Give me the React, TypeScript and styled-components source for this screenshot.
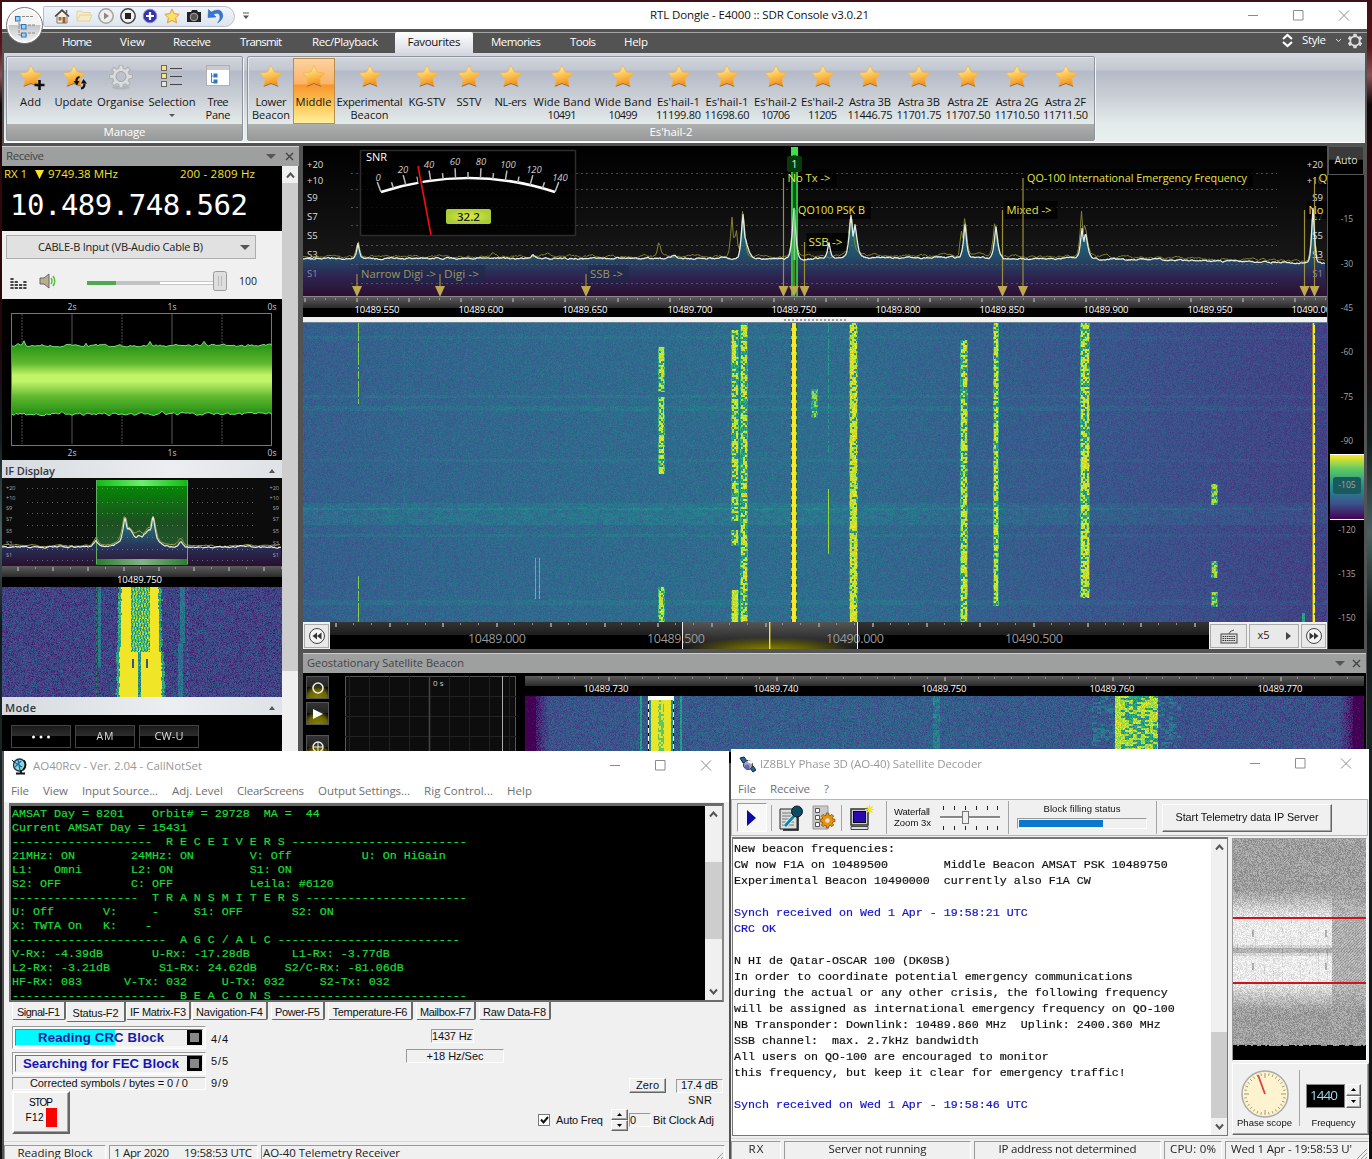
import React, { useLayoutEffect, useRef } from "react";
import styled, { createGlobalStyle, css } from "styled-components";

const UI = `"Open Sans", "Noto Sans", sans-serif`;
const SYS = `"Liberation Sans", Arial, sans-serif`;
const MONO = `"Liberation Mono", "Courier New", monospace`;

const Global = createGlobalStyle`
  *{box-sizing:border-box}
  html,body{margin:0;padding:0;overflow:hidden;background:#1d1b1c}
  svg,canvas{display:block;flex:none}
`;

/* ---------- text set to a fixed advance width ---------- */
const TextBox = styled.span<{ $w?: number; $s: number; $c?: string; $b?: number; $f?: string; $l?: number }>`
  display: block;
  flex: none;
  white-space: pre;
  line-height: 1.1;
  font-family: ${(p) => p.$f || UI};
  font-size: ${(p) => p.$s}px;
  font-weight: ${(p) => p.$b || 400};
  color: ${(p) => p.$c || "inherit"};
  width: ${(p) => (p.$w ? p.$w + "px" : "auto")};
  margin-left: ${(p) => p.$l || 0}px;
`;
type TP = { w?: number; s?: number; c?: string; b?: number; f?: string; l?: number; children: string };
function T({ w, s = 11.5, c, b, f, l, children }: TP) {
  const ref = useRef<HTMLSpanElement>(null);
  useLayoutEffect(() => {
    const el = ref.current;
    if (!el || !w) return;
    el.style.letterSpacing = "0px";
    const r = document.createRange();
    r.selectNodeContents(el);
    const nat = r.getBoundingClientRect().width;
    const n = Math.max(1, children.length - 1);
    el.style.letterSpacing = ((w - nat) / n).toFixed(3) + "px";
  }, [w, s, children]);
  return (
    <TextBox ref={ref} $w={w} $s={s} $c={c} $b={b} $f={f} $l={l}>
      {children}
    </TextBox>
  );
}

/* ---------- noise, colour map, rasters ---------- */
function rng(seed: number) {
  let a = seed;
  return () => {
    a |= 0;
    a = (a + 0x6d2b79f5) | 0;
    let t = Math.imul(a ^ (a >>> 15), 1 | a);
    t = (t + Math.imul(t ^ (t >>> 7), 61 | t)) ^ t;
    return ((t ^ (t >>> 14)) >>> 0) / 4294967296;
  };
}
const STOPS = [
  [68, 1, 84], [71, 44, 122], [59, 81, 139], [44, 113, 142], [33, 144, 141],
  [39, 173, 129], [92, 200, 99], [170, 220, 50], [253, 231, 37],
];
function viridis(v: number): number[] {
  const t = Math.min(0.9999, Math.max(0, v)) * 8;
  const i = Math.floor(t);
  const f = t - i;
  return [0, 1, 2].map((k) => STOPS[i][k] * (1 - f) + STOPS[i + 1][k] * f);
}
type Pixel = (x: number, y: number, r: () => number) => number[];
function Raster({ w, h, seed, pixel }: { w: number; h: number; seed: number; pixel: Pixel }) {
  const ref = useRef<HTMLCanvasElement>(null);
  useLayoutEffect(() => {
    const ctx = ref.current!.getContext("2d")!;
    const img = ctx.createImageData(w, h);
    const r = rng(seed);
    for (let y = 0; y < h; y++)
      for (let x = 0; x < w; x++) {
        const c = pixel(x, y, r);
        const o = (y * w + x) * 4;
        img.data[o] = c[0];
        img.data[o + 1] = c[1];
        img.data[o + 2] = c[2];
        img.data[o + 3] = 255;
      }
    ctx.putImageData(img, 0, 0);
  }, []);
  return <canvas ref={ref} width={w} height={h} />;
}
const hash = (a: number, b: number) => {
  const s = Math.sin(a * 127.1 + b * 311.7) * 43758.5453;
  return s - Math.floor(s);
};

/* [x0, x1, y0, y1, density, level] in waterfall pixels */
const SIGNALS = [
  [55, 55, 0, 80, 0.9, 0.85], [55, 55, 253, 298, 0.95, 0.85],
  [101, 101, 0, 298, 0.5, 0.42], [104, 104, 0, 298, 0.25, 0.42],
  [232, 232, 235, 275, 1, 0.78], [236, 236, 235, 275, 1, 0.78],
  [356, 360, 24, 68, 0.62, 1], [356, 360, 74, 150, 0.62, 1], [356, 360, 264, 298, 0.7, 1],
  [429, 434, 7, 197, 0.55, 1], [429, 434, 207, 222, 0.55, 1], [429, 434, 267, 298, 0.9, 1],
  [438, 443, 0, 298, 0.55, 1],
  [509, 513, 66, 94, 0.42, 0.9],
  [525, 525, 0, 128, 0.7, 0.6], [525, 525, 166, 230, 1, 0.9],
  [547, 553, 0, 298, 0.82, 1],
  [658, 663, 17, 86, 0.52, 1], [658, 663, 86, 298, 0.65, 1],
  [691, 694, 0, 282, 0.7, 1],
  [778, 785, 0, 135, 0.55, 1], [778, 785, 135, 274, 0.72, 1],
  [909, 913, 161, 181, 0.6, 0.95], [909, 913, 238, 254, 0.6, 0.95], [909, 913, 269, 283, 0.6, 0.95],
  [999, 1001, 290, 298, 1, 0.65],
];
const mainPixel: Pixel = (x, y, r) => {
  const u = x / 1024;
  let v = 0.31 + 0.045 * Math.sin(Math.min(1, u / 0.5) * 1.57) - Math.max(0, u - 0.52) * 0.33 - Math.max(0, 0.1 - u) * 0.1;
  const band = (c: number, w: number, a: number) => {
    const d = Math.abs(y - c);
    if (d < w) v += a * (1 - u * 0.35) * (0.4 + 0.9 * hash(Math.floor(x / 5), y >> 1));
  };
  band(14, 2, 0.035); band(73, 2, 0.05); band(85, 3, 0.05); band(183, 4, 0.055);
  band(193, 9, 0.06); band(212, 2, 0.05); band(279, 3, 0.045); band(137, 1.5, 0.035);
  v += (r() + r() - 1) * 0.08;
  if (x >= 489 && x <= 492) return viridis(1);
  if (x === 488 || x === 493) return y % 8 < 5 ? [60, 80, 60] : viridis(0.8);
  if (x === 1010 || x === 1011) return y % 10 < 2 && x === 1011 ? viridis(0.5) : viridis(1);
  if (x === 1009) return [150, 130, 40];
  for (const [a, b, y0, y1, den, lv] of SIGNALS) {
    if (y < y0 || y > y1) continue;
    if (x >= a && x <= b) {
      if (b === a) return hash(x, y >> 1) < den ? viridis(lv - r() * 0.1) : viridis(v);
      const on = hash(a + ((x - a) >> 1) * 7, y >> 1) < den;
      return viridis(on ? lv - r() * 0.15 : 0.4 + r() * 0.3);
    }
    if (b - a > 2 && (x === a - 1 || x === b + 1)) return viridis(0.38 + 0.4 * hash(x, y >> 1));
  }
  return viridis(v);
};
const ifPixel: Pixel = (x, y, r) => {
  let v = 0.2 + (r() + r() - 1) * 0.16;
  const wob = (hash(7, y >> 1) - 0.5) * 2;
  if (x === 94) return y % 6 < 4 ? [40, 120, 90] : viridis(0.1);
  if (x === 185) return y % 6 < 4 ? [70, 110, 90] : viridis(0.1);
  if (Math.abs(x - 97) < 2 && y < 80) v = 0.28 + r() * 0.22;
  if (Math.abs(x - 180 + (y > 55 ? 2 : 0)) < 2.5) v = 0.26 + r() * 0.22;
  const top = 119 - (y > 64 ? 1 : 0) - y / 90;
  const bot = 156 + (y > 64 ? 2 : 0) + y / 90;
  if (x > top - 3 + wob && x < bot + 3 + wob) v = 0.4 + r() * 0.35;
  if (x > top + wob * 0.5 && x < bot + wob * 0.5) v = 0.98;
  if (y < 65 && x > 128 && x < 148) v = (x % 3 === (y >> 2) % 2 ? 0.5 : 0.78) + (r() - 0.5) * 0.35;
  if (y >= 65 && x > 135 && x < 139) v = 0.3 + r() * 0.4;
  if (y > 71 && y < 81 && (x === 130 || x === 131 || x === 144 || x === 145)) v = 0.25;
  return viridis(v);
};
const geoPixel: Pixel = (x, y, r) => {
  const bell = 0.24 + 0.06 * Math.exp(-Math.pow((x - 330) / 280, 2));
  let v = bell + (r() + r() - 1) * 0.13;
  const edge = Math.min(x, 838 - x);
  if (edge < 24) v -= ((24 - edge) / 24) * 0.35;
  if (edge < 11) v = r() < 0.05 ? 0.08 : 0;
  if (x >= 123 && x <= 148 && y < 4) return [255, 255, 255];
  if (x === 123 || x === 148) return y % 8 < 5 ? [255, 255, 255] : [0, 0, 0];
  if (x === 115 || x === 116 || x === 155 || x === 156) v = 0.45 + r() * 0.18;
  if (x > 123 && x < 148) {
    v = 0.45 + r() * 0.15;
    if (x > 125 && x < 146) v = 0.97;
    if (x > 132 && x < 139) v = hash(x >> 1, y >> 1) > 0.35 ? 0.75 : 0.95;
  }
  if (Math.abs(x - 411) < 4) v += 0.06 + (hash(x >> 1, y >> 1) > 0.5 ? 0.12 : 0);
  if (Math.abs(x - 611) < 45) {
    const d = Math.abs(x - 611);
    const h = hash(x >> 2, y >> 1);
    if (d < 22) v = h > 0.45 || x < 596 || (x > 624 && h > 0.25) ? 0.78 + r() * 0.22 : 0.4 + r() * 0.3;
    else if (h > 0.7) v += 0.13;
  }
  return viridis(v);
};
const greyPixel: Pixel = (x, y, r) => {
  if (y >= 206 + (hash(x >> 1, 3) > 0.6 ? 1 : 0)) return [0, 0, 0];
  if (y === 78 || y === 79 || y === 143 || y === 144) return [205, 20, 30];
  const d = Math.abs(y - 111);
  const right = x > 98;
  let v = 158;
  if (d < 60) v = right ? 158 + (60 - d) * 0.9 : 160 + (60 - d) * 2.6;
  if (right && d < 32) v = 182;
  v = Math.min(234, v);
  if (d < 3) v -= right ? 8 : 58;
  else if (d < 6 && !right) v -= 22;
  v += (r() - 0.5) * (d < 32 ? 40 : 54);
  if (right && d < 32 && (x + y) % 3 === 0) v -= 26;
  if (!right && d < 32 && x % 9 === 4 && hash(x, y >> 2) > 0.6) v -= 22;
  if ((x === 19 || x === 20 || x === 92 || x === 93) && (Math.abs(y - 94) < 4 || Math.abs(y - 127) < 4)) v -= 60;
  return [v, v, v];
};

/* ---------- spectrum traces ---------- */
type Peak = [number, number, number];
function trace(n: number, base: (x: number) => number, amp: number, peaks: Peak[], seed: number, step = 2, keep = 0.7) {
  const r = rng(seed);
  let drift = 0;
  const pts: string[] = [];
  for (let x = 0; x <= n; x += step) {
    drift = drift * keep + (r() - 0.5) * amp;
    let lift = 0;
    for (const [px, top, w] of peaks)
      lift = Math.max(lift, (base(x) - top) * Math.exp(-Math.pow(Math.abs(x - px) / w, 1.4)));
    pts.push(`${x},${(base(x) + drift - lift).toFixed(1)}`);
  }
  return pts.join(" ");
}
const mainBase = (x: number) => 112.5 + (x > 780 ? (x - 780) * 0.02 : 0) - (x > 540 && x < 700 ? 0.8 : 0);
const WHITE = trace(1022, mainBase, 1.3, [[55, 98, 2], [230, 109, 3], [370, 109, 5], [440, 69, 2.3], [442, 92, 4], [491, 62, 2.4], [526, 97, 2], [548, 69, 2.6], [552, 79, 3], [662, 78, 2.2], [693, 81, 2.4], [779, 83, 2.2], [782.5, 88, 2.8], [1010, 62, 2]], 5, 1, 0.75);
const OLIVE = trace(1022, (x) => mainBase(x) - 2, 2.2, [[55, 94, 2], [190, 107, 2], [245, 107, 2], [356, 96, 2], [429, 70, 2], [433, 80, 2], [440, 60, 2.2], [491, 58, 2.4], [548, 66, 3], [658, 74, 1], [662, 69, 2.2], [692, 73, 2.4], [778.5, 66, 2], [782, 78, 3], [1010, 57, 2.2]], 11, 1.5, 0.75);
const IFW = trace(279, () => 69, 1.3, [[94, 62, 3], [123, 39, 3.5], [127, 51, 9], [151, 39, 3.5], [147, 51, 9], [137, 58, 12], [179, 63, 3]], 21, 1);
const IFO = trace(279, () => 68, 1.8, [[94, 59, 3], [123, 36, 4], [127, 49, 9], [151, 36, 4], [147, 49, 9], [137, 54, 12], [179, 59, 3]], 27, 2);
const AUDTOP = trace(260, () => 31.5, 2.4, [[5, 28, 1], [12, 28, 1], [74, 28, 1], [138, 27, 1], [185, 28, 1], [192, 28, 1]], 31, 2, 0.4);
const AUDBOT = trace(260, () => 100, 2.6, [[50, 97, 1], [150, 98, 1], [215, 98, 1]], 37, 2, 0.4);

const Ticks = ({ w, from, step, major, h = 7 }: { w: number; from: number; step: number; major: number; h?: number }) => {
  const out = [];
  for (let i = 0, x = from; x < w; i++, x += step)
    out.push(<rect key={i} x={Math.round(x)} y={1} width={i % major === 0 ? 2 : 1} height={i % major === 0 ? h : h * 0.5} fill="#8c8c8c" />);
  return <>{out}</>;
};

const MARKS: [number, number, string, number, boolean][] = [
  [54, 128, "Narrow Digi ->", 75, true], [137, 128, "Digi ->", 35, true], [283, 128, "SSB ->", 33, true],
  [480.5, 32, "No Tx ->", 43, false], [491, 64, "QO100 PSK B", 67, false], [501.5, 96, "SSB ->", 34, false],
  [699.5, 64, "Mixed ->", 45, false], [720, 32, "QO-100 International Emergency Frequency", 220, false],
  [1001.5, 64, "No", 15, false], [1011.5, 32, "Q", 9, false],
];
const SCALE: [string, number][] = [["+20", 18], ["+10", 34], ["S9", 51], ["S7", 70], ["S5", 89], ["S3", 108], ["S1", 127]];

function Spectrum() {
  return (
    <svg width={1024} height={151} fontFamily={UI}>
      <defs>
        <linearGradient id="sb" x1="0" y1="0" x2="0" y2="1"><stop offset="0" stopColor="#000" /><stop offset=".7" stopColor="#161616" /></linearGradient>
        <linearGradient id="sf" gradientUnits="userSpaceOnUse" x1="0" y1="64" x2="0" y2="150">
          <stop offset="0" stopColor="#1f8a80" /><stop offset=".56" stopColor="#234a68" /><stop offset=".78" stopColor="#2d2350" /><stop offset="1" stopColor="#2c1030" />
        </linearGradient>
        <linearGradient id="vf"><stop offset="0" stopColor="#2fc040" /><stop offset=".2" stopColor="#2fc040" /><stop offset=".35" stopColor="#0c5a16" /><stop offset=".65" stopColor="#0c5a16" /><stop offset=".8" stopColor="#2fc040" /><stop offset="1" stopColor="#2fc040" /></linearGradient>
        <radialGradient id="mv"><stop offset="0" stopColor="#dcee3c" /><stop offset="1" stopColor="#accc38" /></radialGradient>
      </defs>
      <rect width={1024} height={151} fill="url(#sb)" />
      <polygon points={`0,150 ${WHITE} 1024,150`} fill="url(#sf)" />
      {[27, 43, 61, 79, 99, 118, 137].map((y) => <line key={y} x1={48} x2={974} y1={y + 0.5} y2={y + 0.5} stroke="#666" strokeOpacity=".7" strokeDasharray="2 3" />)}
      <polyline points={OLIVE} fill="none" stroke="#84832f" strokeWidth="1" />
      {SCALE.map(([s, y], i) => <text key={s} x={4} y={y + 4} fontSize={9.5} fill={i === 6 ? "#8d86a5" : "#ddd"}>{s}</text>)}
      {SCALE.map(([s, y], i) => <text key={s} x={1020} y={y + 4} fontSize={9.5} textAnchor="end" fill={i === 6 ? "#8d86a5" : "#ddd"}>{s}</text>)}
      {MARKS.map(([x, y, , w, dim], i) => <rect key={i} x={x + 2} y={y - 9} width={w + 8} height={18} fill={dim ? "#1b2747" : "#000"} fillOpacity={dim ? 0.5 : 0.75} />)}
      <rect x={488} y={2} width={7} height={148} fill="url(#vf)" />
      {MARKS.map(([x, y, s, w, dim], i) => (
        <g key={i}>
          <line x1={x} x2={x} y1={y} y2={142} stroke="#9b9038" strokeWidth={1.2} />
          <text x={x + 4} y={y + 4.2} fontSize={11.5} textLength={w} lengthAdjust="spacingAndGlyphs" fill={dim ? "#9c9765" : "#e6e44a"}>{s}</text>
          <polygon points={`${x - 5},140 ${x + 5},140 ${x},151`} fill="#bba94c" />
        </g>
      ))}
      <polyline points={WHITE} fill="none" stroke="#e4eae6" strokeWidth="1.3" strokeLinejoin="round" />
      <path d="M491.500 64v50" stroke="#7fd08c" strokeWidth="2" />
      <rect x={484} y={10} width={15} height={16} rx={2} fill="#063c0c" />
      <text x={491.5} y={22} fontSize={11} textAnchor="middle" fill="#d8f0d8">1</text>
      <rect x={488} y={1} width={7} height={8} fill="#3be04c" />
      <rect x={57.5} y={4.5} width={215} height={85} fill="#000" fillOpacity=".82" stroke="#2c2c2c" strokeWidth="1.5" />
      <text x={63} y={15} fontSize={11} textLength={21} fill="#fff">SNR</text>
      <path d="M78 46Q166 18 252 46" fill="none" stroke="#fff" strokeWidth="2.6" />
      {Array.from({ length: 15 }, (_, i) => {
        const t = i / 14;
        const x = 78 + 174 * t;
        const y = (1 - t) * (1 - t) * 46 + 2 * t * (1 - t) * 18 + t * t * 46;
        const l = i % 2 ? 6 : 10;
        const k = (t - 0.5) * 0.75;
        return <line key={i} x1={x} y1={y} x2={x + k * l} y2={y - l} stroke="#bbb" strokeWidth="1.5" />;
      })}
      {[[75, 35, "0"], [100, 27, "20"], [126, 22, "40"], [152, 19, "60"], [178, 19, "80"], [205, 22, "100"], [231, 27, "120"], [257, 35, "140"]].map(([x, y, s]) => (
        <text key={s} x={x} y={y} fontSize={9.5} fontStyle="italic" textAnchor="middle" fill="#ccc">{s}</text>
      ))}
      <polygon points="113,18 117,18 127,89 122,89" fill="#000" />
      <line x1={115} y1={20} x2={128} y2={89} stroke="#f01010" strokeWidth="1.6" />
      <rect x={143} y={63} width={45} height={15} rx={2} fill="url(#mv)" />
      <text x={165.5} y={75} fontSize={11.5} fontWeight={600} textAnchor="middle" fill="#222">32.2</text>
      <line x1={0} x2={1024} y1={150.5} y2={150.5} stroke="#8b8790" />
    </svg>
  );
}

/* ---------- icons ---------- */
const Star = ({ s = 26 }: { s?: number }) => (
  <svg width={s} height={s} viewBox="0 0 26 26">
    <defs><linearGradient id="st" x1="0" y1="0" x2="0.3" y2="1"><stop offset="0" stopColor="#fff6c4" /><stop offset=".45" stopColor="#fdd066" /><stop offset="1" stopColor="#f6941a" /></linearGradient></defs>
    <path d="M13 .300L16.300 7 24 8.300 18.800 13.800 20 21 13 18.200 6 21 7.200 13.800 2 8.300 9.700 7Z" fill="url(#st)" stroke="#eeb152" strokeWidth=".7" strokeLinejoin="round" />
    <path d="M5.800 21.300L13 18.500 20.200 21.300" fill="none" stroke="#8a6048" strokeWidth=".9" />
  </svg>
);
const gearPath = (cx: number, cy: number, r: number, n = 8) => {
  const p: string[] = [];
  for (let i = 0; i < n; i++)
    for (const [o, k] of [[-0.32, 0.74], [-0.2, 1], [0.2, 1], [0.32, 0.74]]) {
      const a = ((i + o) / n) * Math.PI * 2 - Math.PI / 2;
      p.push(`${(cx + Math.cos(a) * r * k).toFixed(1)} ${(cy + Math.sin(a) * r * k).toFixed(1)}`);
    }
  return "M" + p.join("L") + "Z";
};
const RIcon = ({ kind }: { kind: string }) => {
  if (kind === "add") return <svg width={30} height={28}><g transform="translate(2 0)"><Star /></g><path d="M18.500 20h10M23.500 15v10" stroke="#111" strokeWidth="2.600" /></svg>;
  if (kind === "update") return <svg width={30} height={28}><g transform="translate(2 0)"><Star /></g><path d="M20.500 12q-3.500.500-3 5" stroke="#111" strokeWidth="2.200" fill="none" /><path d="M14.500 16l3.500 4.500 2.500-4.500Z" fill="#111" /><path d="M22 23.500q3.500-.500 3.500-5" stroke="#111" strokeWidth="2.200" fill="none" /><path d="M22 18.500l2.500-4.500 3.500 4.500Z" fill="#111" /></svg>;
  if (kind === "gear") return <svg width={28} height={28}><ellipse cx="14" cy="22.500" rx="9" ry="2" fill="#999" opacity=".4" /><path d={gearPath(14, 11.500, 11.5)} fill="#dadcde" stroke="#b0b3b6" strokeLinejoin="round" strokeWidth="1.200" /><circle cx="14" cy="11.500" r="5" fill="#bdc2cb" stroke="#a0a3a7" /></svg>;
  if (kind === "list") return <svg width={28} height={28}>{[1, 9, 17].map((y, i) => <g key={y}><rect x="3.500" y={y - 0.5} width="5" height="5" fill={i < 2 ? "#fbe08a" : "#e4e8ec"} stroke="#6b6a50" /><path d={`M12 ${y + 2.5}h12`} stroke="#444" /></g>)}</svg>;
  if (kind === "tree") return <svg width={28} height={28}><rect x="2.500" y=".500" width="23" height="20" fill="#fff" stroke="#b0b0b4" /><rect x="3" y="1" width="22" height="4" fill="#c9c9cf" /><path d="M7.500 8v9.500h4M7.500 11h4" stroke="#777" fill="none" /><rect x="9.500" y="8.500" width="4" height="4" fill="#2a78c8" /><rect x="9.500" y="14.500" width="4" height="4" fill="#2a78c8" /></svg>;
  return <Star />;
};
const Quick = ({ k }: { k: string }) => (
  <svg width={18} height={18} viewBox="0 0 18 18">
    {k === "home" && <><path d="M4 8.500v7.500h10V8.500L9 4Z" fill="#f5efdf" stroke="#777" /><path d="M2 9.500L9 3l7 6.500" stroke="#444" strokeWidth="1.500" fill="none" /><rect x="5.500" y="10" width="3" height="3.500" fill="#b0682c" /><rect x="9.500" y="10" width="3" height="6" fill="#9a5a2a" /><path d="M13.500 3v4" stroke="#666" strokeWidth="1.500" /></>}
    {k === "open" && <path d="M2 14V4h5l1 1.500h7V8M2 14l3-6h12l-2.500 6Z" fill="#f7ebc6" stroke="#e2d3a4" />}
    {k === "play" && <><circle cx="9" cy="9" r="7.200" fill="#eee" stroke="#a2a2a2" strokeWidth="1.500" /><path d="M7 5.500v7l5-3.500Z" fill="#888" /></>}
    {k === "stop" && <><circle cx="9" cy="9" r="7.200" fill="#f2f2f2" stroke="#444" strokeWidth="1.500" /><rect x="6" y="6" width="6" height="6" fill="#222" /></>}
    {k === "plus" && <><circle cx="9" cy="9" r="6.800" fill="#3434ac" stroke="#8a8ad0" /><path d="M9 5v8M5 9h8" stroke="#fff" strokeWidth="2.200" /></>}
    {k === "star" && <path d="M9 2l2.200 4.600 5 .700-3.600 3.500.9 5L9 13.400 4.500 15.800l.9-5L1.800 7.300l5-.700Z" fill="#fde06a" stroke="#e09a35" />}
    {k === "cam" && <><path d="M2 5h4l1-2h5l1 2h3v10H2Z" fill="#222" /><circle cx="9" cy="10" r="3.800" fill="#555" stroke="#aaa" /></>}
    {k === "undo" && <path d="M1.500 2.500L1 10.500l8-.500-2.600-2.400Q11 4.500 12.600 8t-2 8q7-4.500 4.600-10T4.200 5Z" fill="#3577d4" stroke="#2a5eb0" strokeWidth=".500" />}
  </svg>
);
const WinBtns = () => (
  <svg width={112} height={15} stroke="#8c8c8c" fill="none"><path d="M1 6.500h10M46.500 1.500h9.500v9.500h-9.500ZM92 1.500l10 10M102 1.500l-10 10" /></svg>
);
const DownTri = ({ w = 9, h, c = "#555" }: { w?: number; h?: number; c?: string }) => <svg width={w} height={h || w / 2} viewBox="0 0 10 5" preserveAspectRatio="none"><path d="M0 0h10L5 5Z" fill={c} /></svg>;
const Chevron = ({ up }: { up?: boolean }) => <svg width={9} height={7}><path d={up ? "M1 5.500l3.500-4 3.500 4" : "M1 1.500l3.500 4 3.500-4"} stroke="#555" strokeWidth="2" fill="none" /></svg>;
const Grip = () => <svg width={12} height={18} stroke="#999"><path d="M0 18L12 6M4 18l8-8M8 18l4-4" /></svg>;

/* ---------- layout primitives ---------- */
const Row = styled.div<{ $h?: number; $w?: number; $g?: number; $l?: number; $t?: number; $a?: string }>`
  display: flex;
  flex: none;
  align-items: ${(p) => p.$a || "center"};
  gap: ${(p) => p.$g || 0}px;
  height: ${(p) => (p.$h ? p.$h + "px" : "auto")};
  width: ${(p) => (p.$w ? p.$w + "px" : "auto")};
  margin-left: ${(p) => p.$l || 0}px;
  margin-top: ${(p) => p.$t || 0}px;
`;
const Col = styled.div<{ $w?: number; $h?: number; $l?: number }>`
  display: flex;
  flex-direction: column;
  flex: none;
  width: ${(p) => (p.$w ? p.$w + "px" : "auto")};
  height: ${(p) => (p.$h ? p.$h + "px" : "auto")};
  margin-left: ${(p) => p.$l || 0}px;
`;
const Desktop = styled.div`
  position: relative;
  width: 1372px;
  height: 1159px;
  overflow: hidden;
  background: linear-gradient(180deg, #3c1014 0, #5a1418 4%, #8a5050 6.5%, #100808 9%, #32080c 16%, #210709 30%, #0f2020 38%, #4a6060 46%, #0c1a1a 54%, #1a2526 62%, #10100f 100%);
`;
const Win = styled.section<{ $x: number; $y: number; $w: number; $h: number; $bg: string }>`
  position: absolute;
  left: ${(p) => p.$x}px;
  top: ${(p) => p.$y}px;
  width: ${(p) => p.$w}px;
  height: ${(p) => p.$h}px;
  background: ${(p) => p.$bg};
  display: flex;
  flex-direction: column;
  overflow: hidden;
`;

/* ---------- ribbon ---------- */
const TitleBar = styled.header`
  display: flex; align-items: center; height: 27px; background: #fff; flex: none;
`;
const Pill = styled.div`
  display: flex; align-items: center; gap: 4px; height: 21px; width: 192px; margin: 1px 0 0 41px; padding-left: 9px;
  border: 1px solid #b9bfca; border-radius: 2px 11px 11px 2px; background: linear-gradient(#f0f4f9, #dfe6ef);
`;
const Orb = styled.div`
  position: absolute; left: 4px; top: 5px; width: 37px; height: 37px; border-radius: 50%;
  background: linear-gradient(#f4f4f5 0 48%, #c6c7ca 50%, #f5f5f5); border: 1px solid #777; box-shadow: inset 0 0 0 1.5px #fff;
`;
const TabBar = styled.nav`
  display: flex; align-items: center; height: 24px; flex: none; padding-top: 2px;
  background: #535353; border-top: 1px solid #535353; box-shadow: inset 0 2px 0 #535353, inset 0 3px 0 #a5a5a5;
`;
const ActiveTab = styled.div`
  display: flex; align-items: center; justify-content: center; width: 78px; height: 22px; margin: 0 18px 0 17px;
  background: linear-gradient(#fff, #d6dae1); border-radius: 2px 2px 0 0;
`;
const Ribbon = styled.div`
  display: flex; align-items: flex-start; gap: 4px; height: 90px; flex: none; margin: 0 2px 0 2px; padding: 3px 2px 0;
  background: linear-gradient(#d5d8df 0, #c2c7d1 17px, #b4bac7 18px, #c8cdd4 42px, #e3eaea 70px, #e9f1f0); border-bottom: 1px solid #fff;
`;
const Group = styled.div<{ $w: number }>`
  width: ${(p) => p.$w}px; height: 85px; border: 1px solid #8f949c; border-radius: 2px; display: flex; flex-direction: column;
  box-shadow: inset 1px 1px 0 #e4e7ec, 1px 1px 0 #f2f4f6;
`;
const GroupItems = styled.div`display: flex; height: 67px; padding-left: 1.5px;`;
const GroupFoot = styled.div`
  flex: 1; display: flex; align-items: center; justify-content: center; background: linear-gradient(#adb0ae, #979a99);
`;
const Item = styled.div<{ $w: number; $on?: boolean }>`
  width: ${(p) => p.$w}px; flex: none; display: flex; flex-direction: column; align-items: center; padding-top: 7px; margin-top: 1px; color: #151515;
  ${(p) => p.$on && css`background: linear-gradient(#fbd4a4 0, #fbb267 26px, #f8962c 27px, #fdc95b 48px, #fff2a0); box-shadow: inset 0 0 0 1px #b78c4c;`}
`;
const ItemIcon = styled.div`height: 31px; display: flex; justify-content: center;`;
type ItemDef = { w: number; icon?: string; l1: string; w1: number; l2?: string; w2?: number; on?: boolean; drop?: boolean };
const MANAGE: ItemDef[] = [
  { w: 44, icon: "add", l1: "Add", w1: 21 }, { w: 42, icon: "update", l1: "Update", w1: 38 }, { w: 52, icon: "gear", l1: "Organise", w1: 47 },
  { w: 51, icon: "list", l1: "Selection", w1: 47, drop: true }, { w: 41, icon: "tree", l1: "Tree", w1: 21, l2: "Pane", w2: 25 },
];
const FAVS: ItemDef[] = [
  { w: 43, l1: "Lower", w1: 31, l2: "Beacon", w2: 38 }, { w: 42, l1: "Middle", w1: 36, on: true }, { w: 70, l1: "Experimental", w1: 66, l2: "Beacon", w2: 38 },
  { w: 45, l1: "KG-STV", w1: 37 }, { w: 39, l1: "SSTV", w1: 25 }, { w: 44, l1: "NL-ers", w1: 32 }, { w: 59, l1: "Wide Band", w1: 57, l2: "10491", w2: 29 },
  { w: 63, l1: "Wide Band", w1: 57, l2: "10499", w2: 29 }, { w: 48, l1: "Es'hail-1", w1: 43, l2: "11199.80", w2: 45 }, { w: 49, l1: "Es'hail-1", w1: 43, l2: "11698.60", w2: 45 },
  { w: 48, l1: "Es'hail-2", w1: 43, l2: "10706", w2: 29 }, { w: 46, l1: "Es'hail-2", w1: 43, l2: "11205", w2: 29 }, { w: 49, l1: "Astra 3B", w1: 42, l2: "11446.75", w2: 45 },
  { w: 49, l1: "Astra 3B", w1: 42, l2: "11701.75", w2: 45 }, { w: 49, l1: "Astra 2E", w1: 41, l2: "11707.50", w2: 45 }, { w: 49, l1: "Astra 2G", w1: 43, l2: "11710.50", w2: 45 },
  { w: 48, l1: "Astra 2F", w1: 41, l2: "11711.50", w2: 45 },
];
const RibbonGroup = ({ w, items, name, nw }: { w: number; items: ItemDef[]; name: string; nw: number }) => (
  <Group $w={w}>
    <GroupItems>
      {items.map((i, k) => (
        <Item key={k} $w={i.w} $on={i.on}>
          <ItemIcon><RIcon kind={i.icon || "star"} /></ItemIcon>
          <Row $h={13}><T w={i.w1} s={11.2}>{i.l1}</T></Row>
          {i.l2 && <Row $h={13}><T w={i.w2} s={11}>{i.l2}</T></Row>}
          {i.drop && <Row $h={12}><DownTri w={6} /></Row>}
        </Item>
      ))}
    </GroupItems>
    <GroupFoot><T w={nw} c="#fff">{name}</T></GroupFoot>
  </Group>
);

/* ---------- docked panels ---------- */
const PaneHead = styled.div<{ $h: number }>`
  display: flex; align-items: center; justify-content: space-between; height: ${(p) => p.$h}px; flex: none; padding: 0 5px 1px 4px; background: #9e9f9f; color: #444;
  border-top: 1px solid #ccc;
`;
const FreqBox = styled.div`height: 65px; background: #000; color: #f5e326; flex: none;`;
const Combo = styled.div`
  height: 24px; width: 250px; margin: 4px 0 0 4px; display: flex; align-items: center; background: #e1e1e1; border: 1px solid #adadad; color: #222; flex: none;
`;
const SectionHead = styled.div`
  display: flex; align-items: center; justify-content: space-between; height: 18px; flex: none; padding: 4px 7px 0 3px; color: #33383e;
  background: linear-gradient(90deg, #d6dade, #eceef1 60%, #dfe2e6);
`;
const DarkBtn = styled.div`
  width: 60px; height: 23px; display: flex; align-items: center; justify-content: center; border: 1px solid #444; color: #ddd;
  background: linear-gradient(#1a1a1a, #2e2e2e 48%, #000 50%);
`;
const RulerBox = styled.div<{ $w: number; $h: number }>`
  position: relative; width: ${(p) => p.$w}px; height: ${(p) => p.$h}px; background: #000; overflow: hidden; flex: none;
`;
const Freq = styled.div<{ $x: number; $b: number }>`
  position: absolute; left: ${(p) => p.$x}px; bottom: ${(p) => p.$b}px; transform: translateX(-50%);
`;
function Ruler({ w, h, bar, labels, tick, lw = 45 }: { w: number; h: number; bar: number; labels: [number, string][]; tick: [number, number, number]; lw?: number }) {
  return (
    <RulerBox $w={w} $h={h}>
      <svg width={w} height={bar}>
        <defs><linearGradient id="rb" x1="0" y1="0" x2="0" y2="1"><stop offset="0" stopColor="#5c5c5c" /><stop offset="1" stopColor="#2a2a2a" /></linearGradient></defs>
        <rect width={w} height={bar} fill="url(#rb)" />
        <Ticks w={w} from={tick[0]} step={tick[1]} major={tick[2]} h={4} />
      </svg>
      {labels.map(([x, s]) => <Freq key={s} $x={x} $b={2}><T s={9.5} w={lw} c="#fff">{s}</T></Freq>)}
    </RulerBox>
  );
}
const Splitter = styled.div`
  height: 6px; background: #f0f0f0; display: flex; align-items: center; padding-left: 481px; flex: none; border-bottom: 1px solid #6a8296;
`;
const Dots = styled.div`width: 62px; height: 2px; background: repeating-linear-gradient(90deg, #999 0 2px, transparent 2px 4px);`;
const LightBtn = styled.div<{ $w: number }>`
  width: ${(p) => p.$w}px; height: 24px; display: flex; align-items: center; justify-content: center; gap: 16px; background: #e9e9e9; border: 1px solid #aaa; color: #222;
`;
const NavBar = styled.div`display: flex; height: 27px; flex: none; align-items: center; background: #f0f0f0; padding: 0 1px; justify-content: space-between;`;
const ScaleCol = styled.div`
  position: relative; width: 36px; height: 503px; margin-left: 1px; background: #000; display: flex; flex-direction: column; align-items: center; flex: none;
`;
const AutoBtn = styled.div`
  width: 36px; height: 29px; border: 1px solid #555; background: linear-gradient(#3a3a3a 0 45%, #000 50%); color: #ddd; display: flex; align-items: center; justify-content: center; margin-bottom: 22px; flex: none;
`;
const DbLabel = styled.div`height: 44.33px; width: 34px; padding-left: 2px; display: flex; align-items: center; justify-content: center; flex: none; z-index: 1; color: #a4a4a4;`;
const DbGrad = styled.div`
  position: absolute; left: 2px; top: 308px; width: 34px; height: 66px; border: solid #fff; border-width: 1px 0; display: flex; align-items: center; justify-content: center;
  background: linear-gradient(#fde725, #5ec962 22%, #21918c 48%, #3b528b 76%, #440154);
`;
const DbBox = styled.div`width: 28px; height: 17px; border-radius: 3px; background: #1b5a5c; margin-bottom: 3px;`;
const SqBtn = styled.div`
  width: 23px; height: 23px; border: 1px solid #555; display: flex; align-items: center; justify-content: center; flex: none;
  background: radial-gradient(circle at 50% 110%, #8d8600 0, #6a6500 40%, transparent 62%), linear-gradient(#333, #222 50%, #050505 50%);
`;
const SdrScroll = styled.div`
  width: 16px; background: linear-gradient(#f0f0f0 17px, #cdcdcd 17px 505px, #f0f0f0 505px); display: flex; flex-direction: column; align-items: center; padding-top: 6px;
`;
const GearSlot = styled.div`margin-left: -4px;`;
const GeoBody = styled.div`
  display: flex; height: 90px; background: #000; padding: 3px 0 0 3px; align-items: flex-start;
  & > svg { margin: 0 9px 0 16px; }
`;
const ModeRow = styled.div`display: flex; gap: 4px; height: 60px; background: #000; padding: 10px 0 0 9px; align-items: flex-start;`;
const AudioBox = styled.div`height: 68px; background: #f0f0f0; display: flex; flex-direction: column; flex: none;`;
const Slider = () => (
  <svg width={142} height={22}><rect x={0} y={10.500} width={130} height={3} fill="#fff" stroke="#c6c6c6" /><rect x={0} y={10} width={73} height={4} fill="#c2c2c2" /><rect x={0} y={10} width={29} height={4} fill="#4ea94e" /><rect x={126.500} y={.500} width={13} height={19} rx={2} fill="#dedede" stroke="#9b9b9b" /><path d="M131.500 5v10M134.500 5v10" stroke="#bbb" /></svg>
);
const AudioTop = () => (
  <AudioBox>
    <Combo><T w={165} l={31} s={11}>CABLE-B Input (VB-Audio Cable B)</T><Row $l={37}><DownTri w={10} /></Row></Combo>
    <Row $t={11} $h={24}>
      <Row $l={8}><svg width={17} height={13} stroke="#444" strokeWidth="3.200"><path d="M2 13V1M6.300 13V5M10.600 13V8M14.900 13V4" strokeDasharray="2 1" /></svg></Row>
      <Row $l={12}><svg width={18} height={18}><path d="M1 5h4l5-4v14l-5-4H1Z" fill="#b9b08a" stroke="#666" /><path d="M12 5q2 3 0 6M14 3q3.500 5 0 10" stroke="#4cbf3c" strokeWidth="1.400" fill="none" /></svg></Row>
      <Row $l={30}><Slider /></Row>
      <T w={18} l={10} s={10.5} c="#222">100</T>
    </Row>
  </AudioBox>
);

const SDR = () => (
  <Win $x={2} $y={2} $w={1365} $h={1157} $bg="#535353">
    <TitleBar>
      <Pill>{["home", "open", "play", "stop", "plus", "star", "cam", "undo"].map((k) => <Quick key={k} k={k} />)}</Pill>
      <Row $l={7}><svg width={8} height={8}><path d="M1 1h6" stroke="#555" /><path d="M1 3.500h6l-3 3.500Z" fill="#555" /></svg></Row>
      <T w={219} s={11.5} c="#111" l={400}>RTL Dongle - E4000 :: SDR Console v3.0.21</T>
      <Row $l={378} $t={1}><WinBtns /></Row>
    </TitleBar>
    <TabBar>
      <T w={30} c="#fff" l={60}>Home</T><T w={25} c="#fff" l={28}>View</T><T w={38} c="#fff" l={28}>Receive</T><T w={42} c="#fff" l={29}>Transmit</T><T w={66} c="#fff" l={30}>Rec/Playback</T>
      <ActiveTab><T w={53} c="#111">Favourites</T></ActiveTab>
      <T w={50} c="#fff">Memories</T><T w={26} c="#fff" l={29}>Tools</T><T w={24} c="#fff" l={28}>Help</T>
      <Row $l={634} $h={24} $g={9} $a="flex-start">
        <Row $h={20}><svg width={11} height={15}><path d="M1 6l4.500-4L10 6M1 9l4.500 4L10 9" stroke="#fff" strokeWidth="2.200" fill="none" /></svg></Row>
        <Row $h={20}><T w={24} c="#fff">Style</T></Row>
        <Row $h={20}><svg width={7} height={5}><path d="M1 1l2.500 2.500L6 1" stroke="#ddd" fill="none" /></svg></Row>
        <GearSlot><svg width={16} height={20}><path d={gearPath(8, 10, 7.5, 6)} fill="#ddd" /><circle cx="8" cy="10" r="3.800" fill="#535353" /></svg></GearSlot>
      </Row>
    </TabBar>
    <Ribbon>
      <RibbonGroup w={237} items={MANAGE} name="Manage" nw={42} />
      <RibbonGroup w={848} items={FAVS} name="Es'hail-2" nw={43} />
    </Ribbon>
    <Orb>
      <svg width={35} height={35}><path d="M12 10v17h8M12 17h3M15 8.500h12M21 17h7M21 25h7" stroke="#888" fill="none" strokeDasharray="3 1" /><rect x="8.500" y="8.500" width="4.500" height="4.500" fill="#9fd0f5" stroke="#2878b8" /><rect x="14.500" y="16.500" width="4.500" height="4.500" fill="#9fd0f5" stroke="#2878b8" /><rect x="14.500" y="25" width="4.500" height="4" fill="#9fd0f5" stroke="#2878b8" /></svg>
    </Orb>
    <Row $a="flex-start" $t={3}>
      <Col $w={297}>
        <PaneHead $h={20}><T w={38}>Receive</T><Row $g={9}><DownTri w={10} /><svg width={9} height={9}><path d="M1 1l7 7M8 1l-7 7" stroke="#444" strokeWidth="1.400" /></svg></Row></PaneHead>
        <Row $a="stretch" $h={585}>
          <Col $w={280}>
            <FreqBox>
              <Row $h={17}><T w={23} l={2}>RX 1</T><Row $l={8}><DownTri w={9} h={9} c="#f5e326" /></Row><T w={70} l={4}>9749.38 MHz</T><T w={75} l={62}>200 - 2809 Hz</T></Row>
              <Row $h={46}><T w={238} l={8} s={29} c="#fff" f={`"DejaVu Sans Mono", monospace`}>10.489.748.562</T></Row>
            </FreqBox>
            <AudioTop />
            <svg width={280} height={161} fontFamily={UI} fontSize="8.500" fill="#ccc">
              <defs><linearGradient id="au" x1="0" y1="0" x2="0" y2="1"><stop offset="0" stopColor="#1b8b10" /><stop offset=".3" stopColor="#5fb830" /><stop offset=".46" stopColor="#c2f468" /><stop offset=".54" stopColor="#c2f468" /><stop offset=".75" stopColor="#5fb830" /><stop offset="1" stopColor="#1b8b10" /></linearGradient></defs>
              <rect width={280} height={161} fill="#000" />
              {[[70, "2s"], [170, "1s"], [270, "0s"]].map(([x, s]) => <React.Fragment key={s}><text x={x} y={11} textAnchor="middle">{s}</text><text x={x} y={157} textAnchor="middle">{s}</text></React.Fragment>)}
              {[20, 120, 220].map((x) => <path key={x} d={`M${x} 15v130`} stroke="#333" strokeDasharray="2 1" strokeWidth="1.500" />)}
              {[70, 170].map((x) => <path key={x} d={`M${x} 15v130`} stroke="#2c2c2c" strokeWidth="2" />)}
              <rect x={9.5} y={14.500} width={260} height={132} fill="none" stroke="#777" />
              <g transform="translate(10 15)"><polygon points={`${AUDTOP} ${AUDBOT.split(" ").reverse().join(" ")}`} fill="url(#au)" /><polyline points={AUDTOP} stroke="#74e078" fill="none" /><polyline points={AUDBOT} stroke="#74e078" fill="none" /></g>
            </svg>
            <SectionHead><T w={50} b={600} s={11}>IF Display</T><svg width={6} height={4}><path d="M0 4l3-4 3 4Z" fill="#555" /></svg></SectionHead>
            <svg width={280} height={88} fontFamily={UI} fontSize="5.500" fill="#aaa">
              <defs>
                <linearGradient id="ig" x1="0" y1="0" x2="0" y2="1"><stop offset="0" stopColor="#009000" /><stop offset=".5" stopColor="#1c5020" /><stop offset="1" stopColor="#2b5a3a" /></linearGradient>
                <linearGradient id="ih"><stop offset="0" stopColor="#10b810" /><stop offset=".5" stopColor="#6cf070" /><stop offset="1" stopColor="#10b810" /></linearGradient>
                <linearGradient id="il"><stop offset="0" stopColor="#2c7a30" /><stop offset=".5" stopColor="#84b488" /><stop offset="1" stopColor="#2c7a30" /></linearGradient>
                <linearGradient id="iff" gradientUnits="userSpaceOnUse" x1="0" y1="38" x2="0" y2="88"><stop offset="0" stopColor="#1f8a80" /><stop offset=".6" stopColor="#2a3360" /><stop offset="1" stopColor="#2c1030" /></linearGradient>
              </defs>
              <rect width={280} height={88} fill="#0c0c0c" />
              <rect x={94} y={2} width={92} height={85} fill="url(#ig)" />
              <polygon points={`0,88 ${IFW} 280,88`} fill="url(#iff)" fillOpacity=".92" />
              {[10, 24, 35, 47, 59, 71, 82].map((y) => <path key={y} d={`M25 ${y + 0.5}h230`} stroke="#999" strokeOpacity=".6" strokeDasharray="1 4" />)}
              <rect x={94} y={2} width={92} height={6} fill="url(#ih)" /><rect x={94} y={81} width={92} height={6} fill="url(#il)" />
              <path d="M94.500 2v84M185.500 2v84" stroke="#5fae63" />
              <polyline points={IFO} fill="none" stroke="#9a9744" /><polyline points={IFW} fill="none" stroke="#e4e8e4" strokeWidth="1.200" />
              {["+20", "+10", "S9", "S7", "S5", "S3", "S1"].map((s, i) => <React.Fragment key={s}><text x={4} y={[12, 22, 32, 43, 55, 67, 79][i]}>{s}</text><text x={277} textAnchor="end" y={[12, 22, 32, 43, 55, 67, 79][i]}>{s}</text></React.Fragment>)}
            </svg>
            <Ruler w={280} h={21} bar={11} labels={[[137.500, "10489.750"]]} tick={[15, 17.6, 2]} />
            <Raster w={280} h={110} seed={3} pixel={ifPixel} />
            <SectionHead><T w={31} b={600} s={11}>Mode</T><svg width={6} height={4}><path d="M0 4l3-4 3 4Z" fill="#555" /></svg></SectionHead>
            <ModeRow><DarkBtn><svg width={20} height={4} fill="#fff"><circle cx="2.500" cy="2" r="1.500" /><circle cx="10" cy="2" r="1.500" /><circle cx="17.500" cy="2" r="1.500" /></svg></DarkBtn><DarkBtn><T w={17} s={10.5}>AM</T></DarkBtn><DarkBtn><T w={29} s={11}>CW-U</T></DarkBtn></ModeRow>
          </Col>
          <SdrScroll><Chevron up /></SdrScroll>
        </Row>
      </Col>
      <Col $w={1063} $l={4}>
        <Row $a="flex-start" $h={503}>
          <Col $w={1024}>
            <Spectrum />
            <Ruler w={1024} h={20} bar={11} tick={[1, 10.42, 5]} labels={[[74, "10489.550"], [178, "10489.600"], [282, "10489.650"], [387, "10489.700"], [491, "10489.750"], [595, "10489.800"], [699, "10489.850"], [803, "10489.900"], [907, "10489.950"], [1011, "10490.000"]]} />
            <Splitter><Dots /></Splitter>
            <Raster w={1024} h={299} seed={9} pixel={mainPixel} />
            <NavBar>
              <LightBtn $w={25}><svg width={18} height={18}><circle cx="9" cy="9" r="7.500" fill="#f4f4f4" stroke="#444" /><path d="M9 5.500v7L4.500 9ZM13.500 5.500v7L9 9Z" fill="#333" /></svg></LightBtn>
              <svg width={879} height={27} fontFamily={UI} fontSize="12.500" fill="#999">
                <defs><linearGradient id="nb" x1="0" y1="0" x2="0" y2="1"><stop offset="0" stopColor="#333" /><stop offset=".48" stopColor="#1d1d1d" /><stop offset=".5" stopColor="#000" /></linearGradient>
                  <linearGradient id="ns" x1="0" y1="0" x2="0" y2="1"><stop offset="0" stopColor="#555" /><stop offset="1" stopColor="#181818" /></linearGradient>
                  <radialGradient id="ny"><stop offset="0" stopColor="#938d00" /><stop offset=".5" stopColor="#6f6a00" stopOpacity=".8" /><stop offset="1" stopColor="#6f6a00" stopOpacity="0" /></radialGradient></defs>
                <rect width={879} height={27} fill="url(#nb)" /><rect x={352} width={176} height={27} fill="url(#ns)" /><ellipse cx={440} cy={29} rx={86} ry={14} fill="url(#ny)" />
                <Ticks w={879} from={5} step={17.9} major={3} h={4} />
                {[[167, "10489.000"], [346, "10489.500"], [525, "10490.000"], [704, "10490.500"]].map(([x, s]) => <text key={s} x={x} y={21} textAnchor="middle" textLength={58}>{s}</text>)}
                <path d="M352.500 0v27M527.500 0v27" stroke="#eee" /><rect x={439} width={1.400} height={27} fill="#f5e326" />
              </svg>
              <Row $g={2}>
                <LightBtn $w={37}><svg width={18} height={16}><path d="M9 6q0-3 5-4" stroke="#555" fill="none" /><rect x="1" y="6" width="16" height="9" fill="#ddd" stroke="#444" /><path d="M2.500 8.500h13M2.500 10.500h13M2.500 12.500h13" stroke="#333" strokeDasharray="1.500 .700" /></svg></LightBtn>
                <LightBtn $w={50}><T w={12} s={11}>x5</T><svg width={5} height={8}><path d="M0 0v8l5-4Z" fill="#444" /></svg></LightBtn>
                <LightBtn $w={25}><svg width={18} height={18}><circle cx="9" cy="9" r="7.500" fill="#f4f4f4" stroke="#444" /><path d="M4.500 5.500v7L9 9ZM9 5.500v7l4.500-3.500Z" fill="#333" /></svg></LightBtn>
              </Row>
            </NavBar>
          </Col>
          <ScaleCol>
            <AutoBtn><T w={23} s={10.5}>Auto</T></AutoBtn>
            <DbGrad><DbBox /></DbGrad>
            {["-15", "-30", "-45", "-60", "-75", "-90", "-105", "-120", "-135", "-150"].map((s) => <DbLabel key={s}><T s={8.5}>{s}</T></DbLabel>)}
          </ScaleCol>
        </Row>
        <Col $h={4}>{null}</Col>
        <PaneHead $h={20}><T w={157} s={11}>Geostationary Satellite Beacon</T><Row $g={7}><DownTri w={10} /><svg width={9} height={9}><path d="M1 1l7 7M8 1l-7 7" stroke="#444" strokeWidth="1.400" /></svg></Row></PaneHead>
        <GeoBody>
          <Col $w={23}>
            <SqBtn><svg width={14} height={14}><circle cx="7" cy="7" r="5" stroke="#eee" strokeWidth="1.600" fill="none" /></svg></SqBtn>
            <Row $t={3}><SqBtn><svg width={12} height={12}><path d="M1 1v10l10-5Z" fill="#fff" /></svg></SqBtn></Row>
            <Row $t={10}><SqBtn><svg width={14} height={14}><circle cx="7" cy="7" r="5" stroke="#eee" strokeWidth="1.400" fill="none" /><path d="M7 2v10M2 7h10" stroke="#eee" /></svg></SqBtn></Row>
          </Col>
          <svg width={171} height={80} fontFamily={UI}>
            <rect x={.5} y={.5} width={170} height={90} fill="#0d0d0d" stroke="#555" />
            {[4, 24, 44, 64, 104, 124, 144, 164].map((x) => <path key={x} d={`M${x}.500 0v80`} stroke="#222" />)}
            {[20, 40, 60].map((y) => <path key={y} d={`M0 ${y}.500h171`} stroke="#222" />)}
            <path d="M84.500 0v80" stroke="#444" strokeWidth="1.500" /><path d="M157.500 0v80" stroke="#aaa" /><text x={88} y={9.500} fontSize="8" fill="#ccc">0 s</text>
          </svg>
          <Col $w={839}>
            <Ruler w={839} h={20} bar={10} tick={[-85, 16.8, 10]} lw={45} labels={[[81, "10489.730"], [251, "10489.740"], [419, "10489.750"], [587, "10489.760"], [755, "10489.770"]]} />
            <Raster w={839} h={56} seed={17} pixel={geoPixel} />
          </Col>
        </GeoBody>
      </Col>
    </Row>
  </Win>
);

/* ---------- classic window parts ---------- */
const Plain = styled.div<{ $h: number }>`display: flex; align-items: center; height: ${(p) => p.$h}px; background: #fff; flex: none;`;
const sunken = css`border: 1px solid; border-color: #9a9a9a #fff #fff #9a9a9a;`;
const raised = css`border: 1px solid; border-color: #fff #666 #666 #fff; box-shadow: inset -1px -1px 0 #a5a5a5;`;
const Sunk = styled.div<{ $w: number; $h: number }>`width: ${(p) => p.$w}px; height: ${(p) => p.$h}px; ${sunken}; display: flex; align-items: center; justify-content: center; flex: none;`;
const Btn = styled.div<{ $w: number; $h: number }>`width: ${(p) => p.$w}px; height: ${(p) => p.$h}px; background: #f0f0f0; ${raised}; display: flex; align-items: center; justify-content: center; flex: none;`;
const Console = styled.div`
  margin: 1px 4px 0 5px; width: 715px; height: 199px; border: 2px solid #6b6b6b; border-right-color: #888; border-top-width: 3px; display: flex; background: #f0f0f0; flex: none;
`;
const Mono = styled.pre<{ $c: string; $lh: number }>`
  margin: 0; font: 11.67px/${(p) => p.$lh}px ${MONO}; color: ${(p) => p.$c}; white-space: pre; -webkit-text-stroke: 0.2px currentColor;
`;
const Term = styled.div`width: 694px; background: #000; padding: 1px 0 0 1px; overflow: hidden;`;
const ScrollCol = styled.div<{ $w: number; $a: number; $b: number }>`
  width: ${(p) => p.$w}px; flex: none; display: flex; flex-direction: column; align-items: center; justify-content: space-between; padding: 5px 0;
  background: linear-gradient(#f0f0f0 ${(p) => p.$a}px, #cdcdcd ${(p) => p.$a}px ${(p) => p.$b}px, #f0f0f0 ${(p) => p.$b}px);
`;
const Tab = styled.div<{ $w: number; $on?: boolean }>`
  width: ${(p) => p.$w}px; height: ${(p) => (p.$on ? 20 : 18)}px; display: flex; align-items: center; justify-content: center; border: solid; border-color: #fff #6b6b6b #6b6b6b #fff;
  border-width: 0 2px 1px 1px; border-radius: 0 0 2px 2px; padding-top: ${(p) => (p.$on ? 4 : 3)}px; flex: none; color: #111;
`;
const Prog = styled.div`width: 194px; height: 23px; ${sunken}; padding: 2px; display: flex; background: #f8f8f8; flex: none;`;
const ProgIn = styled.div<{ $fill: number }>`
  width: 188px; display: flex; align-items: center; justify-content: space-between; border: 1px solid #777; border-right-color: #eee; border-bottom-color: #eee;
  background: linear-gradient(90deg, #00f8ff ${(p) => p.$fill}px, #f0f0f0 ${(p) => p.$fill}px);
`;
const ProgText = styled.div`padding-top: 2px;`;
const Led = styled.i`width: 15px; height: 15px; background: #888; border: 3px solid #000; display: block;`;
const StatusBar = styled.div<{ $h: number; $t: number }>`display: flex; gap: 3px; height: ${(p) => p.$h}px; border-top: 1px solid #d7d7d7; padding-top: ${(p) => p.$t}px; flex: none; background: #f0f0f0;`;
const Cell = styled.div<{ $w: number; $j?: string }>`width: ${(p) => p.$w}px; height: 22px; ${sunken}; padding: 1px 1px 0; display: flex; align-items: flex-start; justify-content: ${(p) => p.$j || "center"}; color: #222; flex: none;`;
const Spin = ({ w = 17, h = 11 }: { w?: number; h?: number }) => (
  <Col><Btn $w={w} $h={h}><svg width={5} height={3}><path d="M0 3h5L2.500 0Z" /></svg></Btn><Btn $w={w} $h={h}><svg width={5} height={3}><path d="M0 0h5L2.500 3Z" /></svg></Btn></Col>
);
const Panel = styled.div`display: flex; padding: 4px 10px 0 8px; height: 119px; flex: none;`;
const Stop = styled.div`width: 58px; height: 43px; margin-top: 1px; ${raised}; border-width: 2px; display: flex; flex-direction: column; align-items: center; padding-top: 4px; flex: none;`;
const Red = styled.i`width: 11px; height: 19px; background: #f00; display: block;`;
const Check = styled.div`width: 12px; height: 12px; border: 1px solid #777; background: #fff; display: flex;`;
const FieldZero = styled.div`width: 22px; height: 14px; ${sunken}; display: flex; align-items: center;`;
const MidCol = styled.div`display: flex; flex-direction: column; align-items: center; gap: 6px; width: 98px; padding-top: 3px; margin-left: 154px; flex: none;`;
const RightCol = styled.div`display: flex; flex-direction: column; width: 185px; padding-top: 52px; margin-left: 34px; flex: none; & > div:first-child { padding-left: 91px; }`;

const line = (...p: [number, string][]) => p.reduce((s, [c, t]) => s.padEnd(c) + t, "");
const dash = (n: number) => "-".repeat(n);
const TELEM = [
  line([0, "AMSAT Day = 8201"], [20, "Orbit# = 29728"], [36, "MA =  44"]),
  "Current AMSAT Day = 15431",
  line([0, dash(20)], [22, "R E C E I V E R S"], [40, dash(25)]),
  line([0, "21MHz: ON"], [17, "24MHz: ON"], [34, "V: Off"], [50, "U: On HiGain"]),
  line([0, "L1:   Omni"], [17, "L2: ON"], [34, "S1: ON"]),
  line([0, "S2: OFF"], [17, "C: OFF"], [34, "Leila: #6120"]),
  line([0, dash(18)], [20, "T R A N S M I T E R S"], [42, dash(23)]),
  line([0, "U: Off"], [13, "V:"], [20, "-"], [26, "S1: OFF"], [40, "S2: ON"]),
  line([0, "X: TWTA On"], [13, "K:"], [19, "-"]),
  line([0, dash(22)], [24, "A G C / A L C"], [38, dash(26)]),
  line([0, "V-Rx: -4.39dB"], [20, "U-Rx: -17.28dB"], [40, "L1-Rx: -3.77dB"]),
  line([0, "L2-Rx: -3.21dB"], [21, "S1-Rx: 24.62dB"], [39, "S2/C-Rx: -81.06dB"]),
  line([0, "HF-Rx: 083"], [16, "V-Tx: 032"], [30, "U-Tx: 032"], [44, "S2-Tx: 032"]),
  line([0, dash(22)], [24, "B E A C O N S"], [38, dash(27)]),
].join("\n");

const S = (p: TP) => <T f={SYS} s={11} c="#111" {...p} />;
const M = (p: TP) => <T s={11.5} c="#6f6f6f" {...p} />;

const AO40 = () => (
  <Win $x={4} $y={751} $w={725} $h={408} $bg="#f0f0f0">
    <Plain $h={30}>
      <Row $l={8}><svg width={16} height={17}><circle cx="7.500" cy="7" r="6" fill="#8fd8e0" stroke="#234" strokeWidth="1.300" /><path d="M2 4l8 5M3 9l6-6M6 2l2 10" stroke="#1c6c9c" strokeWidth="1.300" /><path d="M0 2l3 3" stroke="#111" /><path d="M4 15.500h9M9 12v4M12 2.500q3.500 5-1 9.500" stroke="#111" strokeWidth="1.800" fill="none" /></svg></Row>
      <T w={169} l={5} c="#999">AO40Rcv - Ver. 2.04 - CallNotSet</T><Row $l={407}><WinBtns /></Row>
    </Plain>
    <Plain $h={21}><M w={18} l={7}>File</M><M w={25} l={14}>View</M><M w={76} l={14}>Input Source...</M><M w={51} l={14}>Adj. Level</M><M w={67} l={14}>ClearScreens</M><M w={92} l={14}>Output Settings...</M><M w={69} l={14}>Rig Control...</M><M w={25} l={14}>Help</M></Plain>
    <Console>
      <Term><Mono $c="#1fdc3c" $lh={14}>{TELEM}</Mono></Term>
      <ScrollCol $w={17} $a={56} $b={133}><Chevron up /><Chevron /></ScrollCol>
    </Console>
    <Row $l={8} $h={20} $a="flex-start">
      <Tab $w={54}><S w={43}>Signal-F1</S></Tab><Tab $w={60} $on><S w={46}>Status-F2</S></Tab><Tab $w={65}><S w={56}>IF Matrix-F3</S></Tab>
      <Row $l={1} $g={3}><Tab $w={76}><S w={67}>Navigation-F4</S></Tab><Tab $w={54}><S w={45}>Power-F5</S></Tab><Tab $w={85}><S w={75}>Temperature-F6</S></Tab><Tab $w={60}><S w={51}>Mailbox-F7</S></Tab><Tab $w={72}><S w={63}>Raw Data-F8</S></Tab></Row>
    </Row>
    <Panel>
      <Col $w={240}>
        <Row $g={5}><Prog><ProgIn $fill={99}><ProgText><T f={SYS} s={13.2} b={700} c="#1c1ca0" w={126} l={22}>Reading CRC Block</T></ProgText><Led /></ProgIn></Prog><Row $t={3}><S w={17}>4/4</S></Row></Row>
        <Row $g={5} $t={3} $a="flex-start"><Prog><ProgIn $fill={0}><ProgText><T f={SYS} s={13.2} b={700} c="#1515b5" w={156} l={7}>Searching for FEC Block</T></ProgText><Led /></ProgIn></Prog><Row $t={3}><S w={17}>5/5</S></Row></Row>
        <Row $g={5} $t={2}><Sunk $w={194} $h={13}><S w={158}>{"Corrected symbols / bytes = 0 / 0"}</S></Sunk><S w={17}>9/9</S></Row>
        <Stop><T f={SYS} s={10} w={24}>STOP</T><Row $g={2} $h={19}><T f={SYS} s={10} w={18}>F12</T><Red /></Row></Stop>
      </Col>
      <MidCol><Row $l={-6}><Sunk $w={43} $h={14}><S w={40}>1437 Hz</S></Sunk></Row><Sunk $w={98} $h={14}><S w={57}>+18 Hz/Sec</S></Sunk></MidCol>
      <RightCol>
        <Row $g={10}><Btn $w={37} $h={15}><S w={23}>Zero</S></Btn><Sunk $w={47} $h={14}><S w={37}>17.4 dB</S></Sunk></Row>
        <Row $h={15}><S w={24} l={150}>SNR</S></Row>
        <Row $h={24}><Check><svg width={10} height={10}><path d="M2 4.500l2.500 3L9 2" stroke="#111" strokeWidth="2" fill="none" /></svg></Check><S w={47} l={6}>Auto Freq</S><Row $l={8}><Spin /></Row><Row $l={1}><FieldZero><S w={7}>0</S></FieldZero></Row><S w={61} l={2}>Bit Clock Adj</S></Row>
      </RightCol>
    </Panel>
    <StatusBar $h={22} $t={3}>
      <Cell $w={102}><T w={75}>Reading Block</T></Cell>
      <Cell $w={149} $j="flex-start"><T w={55} l={3}>1 Apr 2020</T><T w={68} l={15}>19:58:53 UTC</T></Cell>
      <Cell $w={464} $j="space-between"><T w={137}>AO-40 Telemetry Receiver</T><Grip /></Cell>
    </StatusBar>
  </Win>
);

const Tool = styled.div`display: flex; align-items: center; height: 37px; flex: none; border: 1px solid #b5b5b5; background: #f0f0f0; padding-left: 5px; margin-right: 1px;`;
const Sep = styled.i<{ $l: number; $r: number; $h?: number }>`width: 1px; height: ${(p) => p.$h || 30}px; background: #a5a5a5; margin: 0 ${(p) => p.$r}px 0 ${(p) => p.$l}px; display: block; flex: none;`;
const PlayBtn = styled.div`width: 30px; height: 29px; ${sunken}; background: #f7f7f7; display: flex; align-items: center; justify-content: center; flex: none;`;
const Bar = styled.div`width: 130px; height: 11px; ${sunken}; padding: 1px; & > i { display: block; width: 84px; height: 7px; background: #0a78d0; }`;
const Doc = styled.div`width: 496px; height: 299px; background: #fff; border: 1px solid #777; border-top-width: 2px; display: flex; justify-content: space-between; flex: none;`;
const DocText = styled(Mono)`padding: 2px 0 0 1px;`;
const Blue = styled.span`color: #1414c8;`;
const Scope = styled.div`width: 135px; height: 223px; ${sunken}; margin-bottom: 2px; flex: none; overflow: hidden;`;
const GaugeBox = styled.div`width: 137px; height: 72px; ${raised}; display: flex; justify-content: space-between; align-items: center; padding: 1px 7px 4px 4px; flex: none;`;
const FreqLed = styled.div`width: 39px; height: 24px; background: #000; border: 1px solid #888; display: flex; align-items: center; padding-left: 3px;`;
const FillCol = styled.div`display: flex; flex-direction: column; align-items: center; gap: 4px; width: 130px; padding-bottom: 2px; flex: none;`;
const CenterCol = styled.div`display: flex; flex-direction: column; align-items: center; justify-content: flex-end; height: 62px;`;

const IZ = () => (
  <Win $x={731} $y={749} $w={638} $h={410} $bg="#f0f0f0">
    <Plain $h={30}>
      <Row $l={8}><svg width={17} height={17}><path d="M1 2l4-1 3 4-4 2ZM10 11l4-1 3 4-3 2Z" fill="#1a6a98" stroke="#124" /><circle cx="9" cy="9" r="4.500" fill="#aab" stroke="#334" /><circle cx="8" cy="11" r="2.500" fill="#5a6ad0" /><path d="M9 5l4 2" stroke="#fff" strokeWidth="2" /></svg></Row>
      <T w={222} l={4} c="#999">IZ8BLY Phase 3D (AO-40) Satellite Decoder</T><Row $l={267}><WinBtns /></Row>
    </Plain>
    <Plain $h={20}><M w={18} l={7}>File</M><M w={40} l={14}>Receive</M><M l={14}>?</M></Plain>
    <Tool>
      <PlayBtn><svg width={10} height={16}><path d="M0 0v16l9-8Z" fill="#0a0aa8" /></svg></PlayBtn>
      <Sep $l={4} $r={7} $h={26} />
      <svg width={25} height={26}><path d="M1 4h13l4 3v17H1Z" fill="#ddd" stroke="#222" /><path d="M3 8h12M3 11h12M3 14h12M3 17h12M3 20h12" stroke="#777" /><path d="M19 8v17H4" stroke="#111" strokeWidth="1.500" fill="none" /><path d="M6 21L16 10" stroke="#e8f4f8" strokeWidth="4.500" /><path d="M6 21L16 10" stroke="#0c86a8" strokeWidth="2.800" /><circle cx="18" cy="6.500" r="5.500" fill="#0d4a63" stroke="#02202c" /></svg>
      <Row $l={8}><svg width={24} height={26}><path d="M1 1h15v23H1Z" fill="#c9c9c9" stroke="#999" /><path d="M3.500 3.500h4v4h-4ZM3.500 10.500h4v4h-4ZM3.500 17.500h4v4h-4Z" fill="#fff" stroke="#555" /><path d={gearPath(15.500, 15.500, 7.500)} fill="#e8920c" stroke="#9a5a00" /><circle cx="15.500" cy="15.500" r="2.200" fill="#ddd" /></svg></Row>
      <Sep $l={5} $r={7} $h={26} />
      <svg width={26} height={26}><path d="M2 4h17v16H2Z" fill="#ccc" stroke="#333" strokeWidth="1.500" /><rect x="4.500" y="6.500" width="12" height="11" fill="#2a0ab0" stroke="#000" /><path d="M2 21.500h17v3H2Z" fill="#ddd" stroke="#444" /><path d="M20.500 0v9M16 4.500h9M17.500 1.500l6 6M23.500 1.500l-6 6" stroke="#f4e800" strokeWidth="1.200" /></svg>
      <Sep $l={11} $r={7} $h={33} />
      <Col><S w={36} s={9.5}>Waterfall</S><S w={37} s={9.5}>Zoom 3x</S></Col>
      <Row $l={9}><svg width={61} height={26}><path d="M3.500 1v4M14.500 1v4M25.500 1v4M36.500 1v4M47.500 1v4M57.500 1v4M3.500 21v4M14.500 21v4M25.500 21v4M36.500 21v4M47.500 21v4M57.500 21v4" stroke="#222" /><path d="M0 12h60" stroke="#888" strokeWidth="2" /><path d="M0 13.500h60" stroke="#fff" /><rect x="22.500" y="6.500" width="6" height="12" fill="#f0f0f0" stroke="#777" /></svg></Row>
      <Sep $l={7} $r={8} $h={33} />
      <FillCol><S w={77} s={9.5}>Block filling status</S><Bar><i /></Bar></FillCol>
      <Sep $l={9} $r={5} $h={33} />
      <Btn $w={170} $h={28}><S w={143} s={10.8}>Start Telemetry data IP Server</S></Btn>
    </Tool>
    <Row $t={1} $a="flex-start" $h={301} $l={1}>
      <Doc>
        <DocText $c="#111" $lh={16}>{"New beacon frequencies:\nCW now F1A on 10489500        Middle Beacon AMSAT PSK 10489750\nExperimental Beacon 10490000  currently also F1A CW\n\n"}<Blue>{"Synch received on Wed 1 Apr - 19:58:21 UTC\nCRC OK\n\n"}</Blue>{"N HI de Qatar-OSCAR 100 (DK0SB)\nIn order to coordinate potential emergency communications\nduring the actual or any other crisis, the following frequency\nwill be assigned as international emergency frequency on QO-100\nNB Transponder: Downlink: 10489.860 MHz  Uplink: 2400.360 MHz\nSSB channel:  max. 2.7kHz bandwidth\nAll users on QO-100 are encouraged to monitor\nthis frequency, but keep it clear for emergency traffic!\n\n"}<Blue>Synch received on Wed 1 Apr - 19:58:46 UTC</Blue></DocText>
        <ScrollCol $w={16} $a={193} $b={279}><Chevron up /><Chevron /></ScrollCol>
      </Doc>
      <Col $l={4}>
        <Row $t={1}><Scope><Raster w={133} h={221} seed={41} pixel={greyPixel} /></Scope></Row>
        <GaugeBox>
          <CenterCol>
            <svg width={50} height={48}><circle cx="25" cy="24" r="23" fill="#fdf3cf" stroke="#aaa" strokeWidth="1.500" />
              {Array.from({ length: 32 }, (_, i) => { const a = (i / 32) * Math.PI * 2; const k = i % 8 ? 18.5 : 16; return <line key={i} x1={25 + Math.cos(a) * k} y1={24 + Math.sin(a) * k} x2={25 + Math.cos(a) * 21} y2={24 + Math.sin(a) * 21} stroke="#877f60" strokeWidth=".800" />; })}
              <path d="M25 24L18 5" stroke="#e04040" strokeWidth="1.800" /></svg>
            <S w={55} s={9.500}>Phase scope</S>
          </CenterCol>
          <Sep $l={1} $r={1} $h={56} />
          <CenterCol>
            <Row $g={1}><FreqLed><T w={28} s={13.5} f={UI} c="#9fd8ee">1440</T></FreqLed><Spin w={15} h={12} /></Row>
            <Row $h={21} $a="flex-end"><S w={44} s={9.500}>Frequency</S></Row>
          </CenterCol>
        </GaugeBox>
      </Col>
    </Row>
    <StatusBar $h={22} $t={2}>
      <Cell $w={50}><T w={15}>RX</T></Cell><Cell $w={187}><T w={98}>Server not running</T></Cell><Cell $w={187}><T w={138}>IP address not determined</T></Cell><Cell $w={58}><T w={46}>CPU: 0%</T></Cell>
      <Cell $w={144} $j="space-between"><T w={121} l={4}>{"Wed 1 Apr - 19:58:53 U'"}</T><Grip /></Cell>
    </StatusBar>
  </Win>
);

export default function App() {
  return (
    <Desktop>
      <Global />
      <SDR />
      <AO40 />
      <IZ />
    </Desktop>
  );
}
